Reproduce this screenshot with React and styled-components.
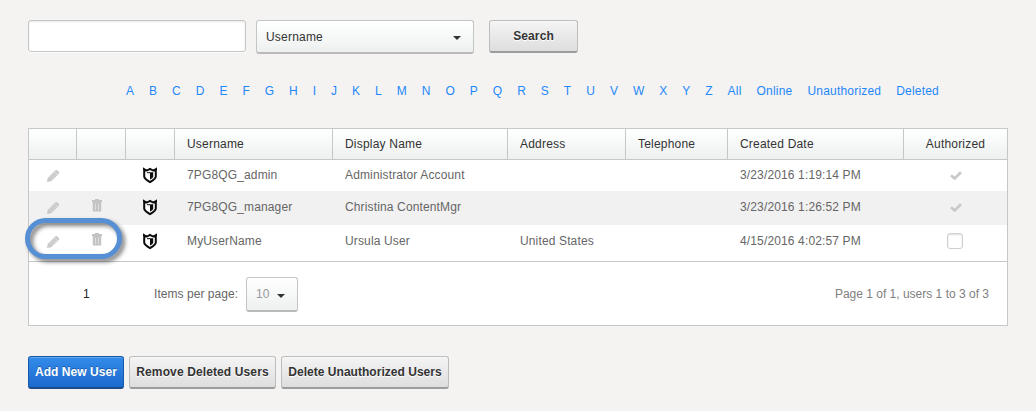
import React from 'react';
import styled, { createGlobalStyle, css } from 'styled-components';

const GlobalStyle = createGlobalStyle`
  * { box-sizing: border-box; }
  body {
    margin: 0;
    background: #f4f3f1;
    color: #333;
    font: 12px/16px "Liberation Sans", Arial, sans-serif;
    letter-spacing: 0.2px;
  }
`;

const Page = styled.main`
  width: 1036px;
  height: 411px;
  padding: 20px 28px 0;
  overflow: hidden;
`;

const SearchBar = styled.form`
  display: flex;
  align-items: flex-start;
  height: 34px;
`;

const SearchInput = styled.input`
  width: 218px;
  height: 32px;
  padding: 0 8px;
  border: 1px solid #c5c5c5;
  border-radius: 3px;
  background: #fff;
  box-shadow: inset 0 1px 2px #e8e8e8, 0 1px 0 #fbfbfb;
  outline: none;
`;

const Dropdown = styled.div`
  display: flex;
  align-items: center;
  justify-content: space-between;
  width: ${(p) => p.$width}px;
  height: ${(p) => p.$height}px;
  padding: 1px ${(p) => p.$end}px 1px 9px;
  border: 1px solid #c4c6c6;
  border-bottom: 2px solid #b9bbbb;
  border-radius: 3px;
  background: linear-gradient(#fff, #eef0f0);
  color: ${(p) => p.$color};
`;

const FieldSelect = styled(Dropdown)`
  margin: 0 15px 0 10px;
`;

const PageSizeSelect = styled(Dropdown)`
  margin-top: 2px;
`;

const Caret = styled.span`
  margin-top: 3px;
  border: 4px solid transparent;
  border-top: 4px solid #333;
  border-bottom: 0;
`;

const primary = css`
  color: #fff;
  background: linear-gradient(#338cea, #1d69ce);
  border-color: #1659a8;
  border-bottom-color: #1a4c87;
  box-shadow: inset 0 1px 0 #68a9ee;
  text-shadow: 0 -1px 0 #1a5cab;
`;

const Button = styled.button`
  width: ${(p) => p.$width}px;
  height: 33px;
  padding: 0 0 1px;
  border: 1px solid #bdbdbd;
  border-bottom: 2px solid #9c9c9c;
  border-radius: 3px;
  background: linear-gradient(#f4f4f4, #dedede);
  box-shadow: inset 0 1px 0 #f8f8f8;
  color: #333;
  font: bold 12px/16px "Liberation Sans", Arial, sans-serif;
  letter-spacing: ${(p) => p.$spacing ?? 0.12}px;
  text-shadow: 0 1px 0 #fff;
  white-space: nowrap;
  ${(p) => p.$primary && primary}
`;

const LetterNav = styled.nav`
  display: flex;
  gap: 15px;
  margin: 29px 0 0 98px;
  height: 16px;
`;

const FilterLink = styled.a`
  color: #1e87fa;
  letter-spacing: ${(p) => (p.$word ? 0.2 : 0)}px;
  cursor: pointer;
`;

const Panel = styled.section`
  position: relative;
  margin-top: 29px;
  width: 980px;
  height: 198px;
  border: 1px solid #c6c8c8;
  background: #fff;
`;

const columns = '48px 49px 49px 158px 175px 118px 102px 176px 103px';

const HeaderRow = styled.div`
  display: grid;
  grid-template-columns: ${columns};
  height: 31px;
  border-bottom: 1px solid #c6c8c8;
  background: linear-gradient(#fff, #eef0f0);
`;

const HeaderCell = styled.div`
  padding: ${(p) => (p.$center ? '7px 0 0' : '7px 0 0 12px')};
  text-align: ${(p) => (p.$center ? 'center' : 'left')};
  border-right: 1px solid #c6c8c8;
  &:last-child { border-right: 0; }
`;

const UserRow = styled.div`
  display: grid;
  grid-template-columns: ${columns};
  height: ${(p) => p.$height}px;
  padding-top: ${(p) => p.$top}px;
  background: ${(p) => (p.$shaded ? '#f1f1f1' : '#fff')};
  color: #666;
  letter-spacing: 0.14px;
`;

const Cell = styled.div`
  height: 16px;
  padding-left: 12px;
  white-space: nowrap;
`;

const IconCell = styled.div`
  display: flex;
  justify-content: center;
  height: 16px;
  padding-right: ${(p) => p.$shift ?? 0}px;
  svg { display: block; overflow: visible; }
`;

const CheckBox = styled.span`
  width: 16px;
  height: 16px;
  border: 1px solid #cfcfcf;
  border-radius: 3px;
  background: #fff;
  box-shadow: inset 0 1px 2px #ddd;
`;

const Footer = styled.footer`
  display: flex;
  align-items: center;
  height: 64px;
  padding: 0 18px 0 54px;
  border-top: 1px solid #c6c8c8;
  color: #666;
`;

const PageNumber = styled.span`
  width: 71px;
  color: #222;
`;

const PerPage = styled.label`
  width: 92px;
  letter-spacing: 0.05px;
`;

const Summary = styled.span`
  margin-left: auto;
  color: #808080;
  letter-spacing: 0;
`;

const Highlight = styled.div`
  position: absolute;
  left: -4px;
  top: 89px;
  width: 97px;
  height: 41px;
  border: 5px solid #568fd3;
  border-radius: 21px;
  filter: drop-shadow(3px 3px 2px rgba(0, 0, 0, 0.5));
`;

const Actions = styled.div`
  display: flex;
  gap: 5px;
  margin-top: 30px;
`;

const Pencil = () => (
  <svg width="14" height="16" viewBox="0 0 14 16">
    <path d="M1 15l.7-4L8.8 3.7c.9-.9 2-.9 2.9 0l.8.8c.9.9.9 1.9 0 2.8L5.2 14.3z" fill="#c9c9c9" />
    <path d="M3.2 11l6-6M5 12.8l6-6M8.3 4.3l3.5 3.5" stroke="#e2e2e2" strokeWidth=".7" />
  </svg>
);

const Trash = () => (
  <svg width="10" height="16" viewBox="0 0 10 16">
    <path d="M0 1h3V0h4v1h3v2.2H0zM.8 3.2h8.4v9.3H.8z" fill="#c3c3c3" />
    <path d="M3.5 4.5V11M6.5 4.5V11" stroke="#dedede" strokeWidth="1" />
  </svg>
);

const Shield = () => (
  <svg width="14" height="16" viewBox="0 0 14 16">
    <path d="M1.2 2.4q2 1.6 3.8.6L7 1.8 9 3q1.8 1 3.8-.6v7.2c0 1.8-2 3.3-5.8 5.6C3.200 12.900 1.200 11.400 1.200 9.600z" fill="#fff" stroke="#0c0c0c" strokeWidth="2" />
    <path d="M0 0.800L3 3H0zM14 0.800L11 3h3z" fill="#0c0c0c" />
    <path d="M7 5.200h3.200v4.300c0 1-1.100 1.900-3.200 3.100z" fill="#0c0c0c" />
    <path d="M4 5.700h3" stroke="#0c0c0c" strokeWidth="1" />
  </svg>
);

const Check = () => (
  <svg width="12" height="16" viewBox="0 0 12 16">
    <path d="M1 8.3l3.6 3.1L11 5.2" fill="none" stroke="#c8c8c8" strokeWidth="2.7" />
  </svg>
);

const users = [
  { name: '7PG8QG_admin', display: 'Administrator Account', address: '', created: '3/23/2016 1:19:14 PM', authorized: true, removable: false, height: 31, top: 7 },
  { name: '7PG8QG_manager', display: 'Christina ContentMgr', address: '', created: '3/23/2016 1:26:52 PM', authorized: true, removable: true, height: 34, top: 8 },
  { name: 'MyUserName', display: 'Ursula User', address: 'United States', created: '4/15/2016 4:02:57 PM', authorized: false, removable: true, height: 36, top: 8 },
];

const filters = [...'ABCDEFGHIJKLMNOPQRSTUVWXYZ', 'All', 'Online', 'Unauthorized', 'Deleted'];
const headings = ['', '', '', 'Username', 'Display Name', 'Address', 'Telephone', 'Created Date', 'Authorized'];

export default function App() {
  return (
    <Page>
      <GlobalStyle />
      <SearchBar>
        <SearchInput aria-label="Search users" />
        <FieldSelect $width={218} $height={34} $end={12} $color="#333">
          Username<Caret />
        </FieldSelect>
        <Button type="button" $width={89}>Search</Button>
      </SearchBar>
      <LetterNav>
        {filters.map((f) => <FilterLink key={f} $word={f.length > 1}>{f}</FilterLink>)}
      </LetterNav>
      <Panel>
        <HeaderRow>
          {headings.map((h, i) => <HeaderCell key={i} $center={i === 8}>{h}</HeaderCell>)}
        </HeaderRow>
        {users.map((u, i) => (
          <UserRow key={u.name} $height={u.height} $top={u.top} $shaded={i === 1}>
            <IconCell><Pencil /></IconCell>
            <IconCell $shift={9}>{u.removable && <Trash />}</IconCell>
            <IconCell $shift={1}><Shield /></IconCell>
            <Cell>{u.name}</Cell>
            <Cell>{u.display}</Cell>
            <Cell>{u.address}</Cell>
            <Cell />
            <Cell>{u.created}</Cell>
            <IconCell $shift={u.authorized ? 0 : 1}>{u.authorized ? <Check /> : <CheckBox />}</IconCell>
          </UserRow>
        ))}
        <Footer>
          <PageNumber>1</PageNumber>
          <PerPage>Items per page:</PerPage>
          <PageSizeSelect $width={52} $height={35} $end={12} $color="#999">10<Caret /></PageSizeSelect>
          <Summary>Page 1 of 1, users 1 to 3 of 3</Summary>
        </Footer>
        <Highlight />
      </Panel>
      <Actions>
        <Button $primary $width={96} $spacing={0.07}>Add New User</Button>
        <Button $width={147}>Remove Deleted Users</Button>
        <Button $width={168} $spacing={0.03}>Delete Unauthorized Users</Button>
      </Actions>
    </Page>
  );
}
